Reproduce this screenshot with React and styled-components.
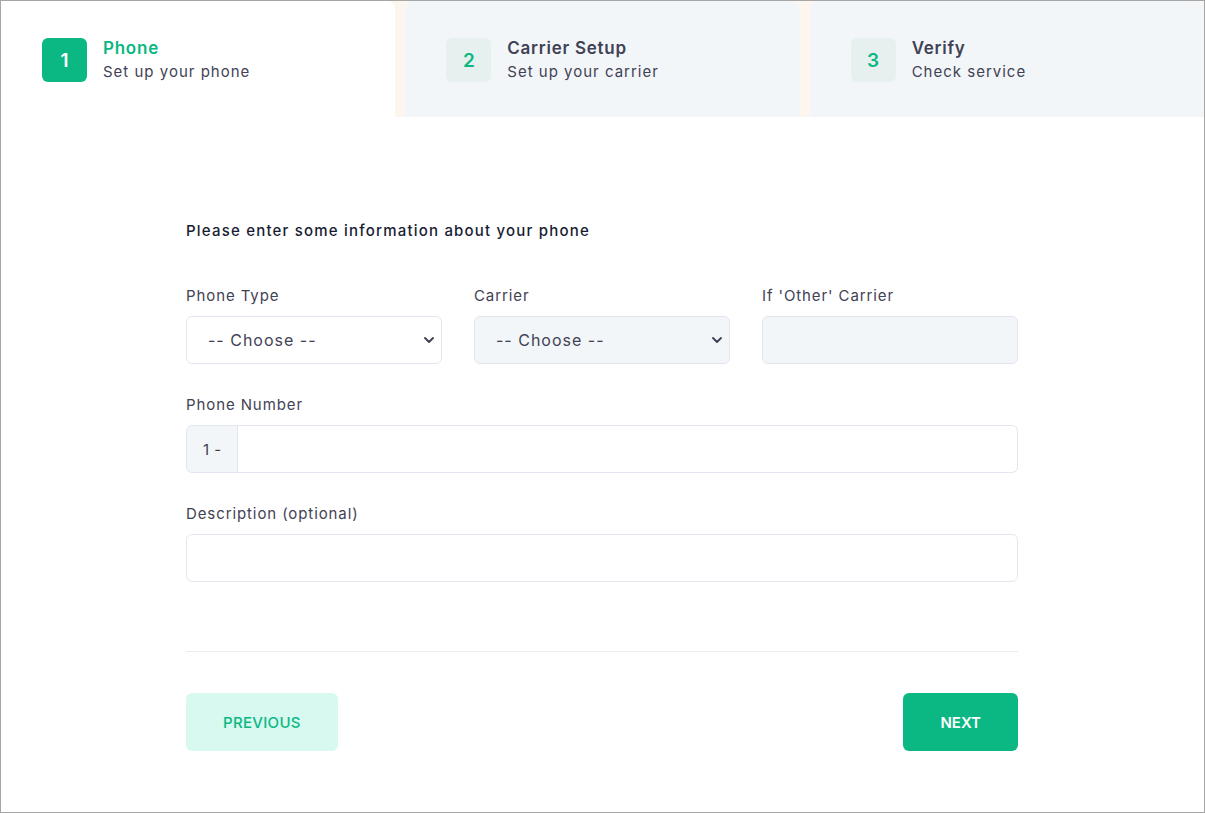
import styled, { createGlobalStyle } from "styled-components";

const GlobalStyle = createGlobalStyle`
	* { box-sizing: border-box; }
	body {
		margin: 0;
		font-family: "Inter", "Noto Sans", sans-serif;
		color: #3f4254;
		background: #ffffff;
	}
`;

const green = "#0bb783";

const steps = [
	{ num: 1, title: "Phone", sub: "Set up your phone" },
	{ num: 2, title: "Carrier Setup", sub: "Set up your carrier" },
	{ num: 3, title: "Verify", sub: "Check service" },
];

const Chevron = () => (
	<ChevronIcon width="12" height="12" viewBox="0 0 12 12" fill="none">
		<path d="M2 4l4 4 4-4" stroke="#3f4254" strokeWidth="1.9" strokeLinecap="round" strokeLinejoin="round" />
	</ChevronIcon>
);

const App = () => {
	return (
		<Frame>
			<GlobalStyle />
			<Stepper>
				{steps.map((step, i) => (
					<Step key={step.num} $active={i === 0}>
						<Badge $active={i === 0}>{step.num}</Badge>
						<StepText>
							<StepTitle $active={i === 0}>{step.title}</StepTitle>
							<StepSub>{step.sub}</StepSub>
						</StepText>
					</Step>
				))}
			</Stepper>

			<FormBody>
				<Heading>Please enter some information about your phone</Heading>

				<Row>
					<Group>
						<Label>Phone Type</Label>
						<SelectWrap>
							<Select defaultValue="">
								<option value="">-- Choose --</option>
							</Select>
							<Chevron />
						</SelectWrap>
					</Group>
					<Group>
						<Label>Carrier</Label>
						<SelectWrap>
							<Select defaultValue="" $solid>
								<option value="">-- Choose --</option>
							</Select>
							<Chevron />
						</SelectWrap>
					</Group>
					<Group>
						<Label>If 'Other' Carrier</Label>
						<Input $solid />
					</Group>
				</Row>

				<Group>
					<Label>Phone Number</Label>
					<InputGroup>
						<Prepend>1 -</Prepend>
						<Input $attached />
					</InputGroup>
				</Group>

				<Group>
					<Label>Description (optional)</Label>
					<Input />
				</Group>

				<Divider />

				<Actions>
					<Button $light>Previous</Button>
					<Button>Next</Button>
				</Actions>
			</FormBody>
		</Frame>
	);
};

const Frame = styled.div`
	height: 813px;
	border: 1px solid #a6a6a6;
	background: #ffffff;
	overflow: hidden;
`;

const Stepper = styled.div`
	display: flex;
	gap: 10px;
	background: #fcf6ef;
	height: 116px;
`;

const Step = styled.div`
	flex: 1;
	display: flex;
	align-items: center;
	gap: 16px;
	padding: 2px 0 0 41px;
	background: ${(p) => (p.$active ? "#ffffff" : "#f3f6f9")};
	border-radius: ${(p) => (p.$active ? "0 8px 0 0" : "8px 8px 0 0")};
`;

const Badge = styled.div`
	width: 45px;
	height: 44px;
	border-radius: 6px;
	display: flex;
	align-items: center;
	justify-content: center;
	font-size: 19px;
	font-weight: 600;
	color: ${(p) => (p.$active ? "#ffffff" : green)};
	background: ${(p) => (p.$active ? green : "#e6f0ee")};
`;

const StepText = styled.div`
	display: flex;
	flex-direction: column;
	gap: 2px;
`;

const StepTitle = styled.div`
	font-size: 17px;
	font-weight: 600;
	line-height: 22px;
	letter-spacing: 0.75px;
	color: ${(p) => (p.$active ? green : "#3f4254")};
`;

const StepSub = styled.div`
	font-size: 15px;
	line-height: 22px;
	letter-spacing: 1px;
	color: #3f4254;
`;

const FormBody = styled.div`
	width: 832px;
	margin-left: 185px;
	padding-top: 103px;
`;

const Heading = styled.div`
	font-size: 15px;
	font-weight: 500;
	line-height: 22px;
	letter-spacing: 1.2px;
	color: #181c32;
	margin-bottom: 43px;
`;

const Row = styled.div`
	display: grid;
	grid-template-columns: repeat(3, 1fr);
	gap: 32px;
`;

const Group = styled.div`
	margin-bottom: 30px;
`;

const Label = styled.div`
	font-size: 15px;
	line-height: 22px;
	letter-spacing: 0.9px;
	color: #3f4254;
	margin-bottom: 9px;
`;

const SelectWrap = styled.div`
	position: relative;
`;

const ChevronIcon = styled.svg`
	position: absolute;
	right: 7px;
	top: 18px;
	pointer-events: none;
`;

const Select = styled.select`
	width: 100%;
	height: 48px;
	appearance: none;
	border: 1px solid #e4e6ef;
	border-radius: 6px;
	background: ${(p) => (p.$solid ? "#f3f6f9" : "#ffffff")};
	padding: 0 21px;
	font-family: inherit;
	font-size: 16px;
	letter-spacing: 1px;
	color: #3f4254;
	outline: none;
`;

const Input = styled.input`
	display: block;
	width: 100%;
	height: 48px;
	border: 1px solid #e4e6ef;
	border-radius: ${(p) => (p.$attached ? "0 6px 6px 0" : "6px")};
	background: ${(p) => (p.$solid ? "#f3f6f9" : "#ffffff")};
	padding: 0 20px;
	font-family: inherit;
	font-size: 15px;
	outline: none;
	${(p) => p.$attached && "flex: 1; border-left: none;"}
`;

const InputGroup = styled.div`
	display: flex;
`;

const Prepend = styled.div`
	width: 52px;
	height: 48px;
	display: flex;
	align-items: center;
	padding-left: 16px;
	background: #f3f6f9;
	border: 1px solid #e4e6ef;
	border-radius: 6px 0 0 6px;
	font-size: 15px;
	letter-spacing: 0.5px;
	color: #3f4254;
`;

const Divider = styled.div`
	height: 1px;
	background: #ebedf3;
	margin-top: 69px;
`;

const Actions = styled.div`
	display: flex;
	justify-content: space-between;
	margin-top: 41px;
`;

const Button = styled.button`
	height: 58px;
	padding: 0 37px;
	border: none;
	border-radius: 6px;
	font-family: inherit;
	font-size: 15px;
	font-weight: ${(p) => (p.$light ? 500 : 600)};
	letter-spacing: ${(p) => (p.$light ? "0.3px" : "0")};
	text-transform: uppercase;
	color: ${(p) => (p.$light ? green : "#ffffff")};
	background: ${(p) => (p.$light ? "#d7f9ef" : green)};
	cursor: pointer;
`;

export default App;
